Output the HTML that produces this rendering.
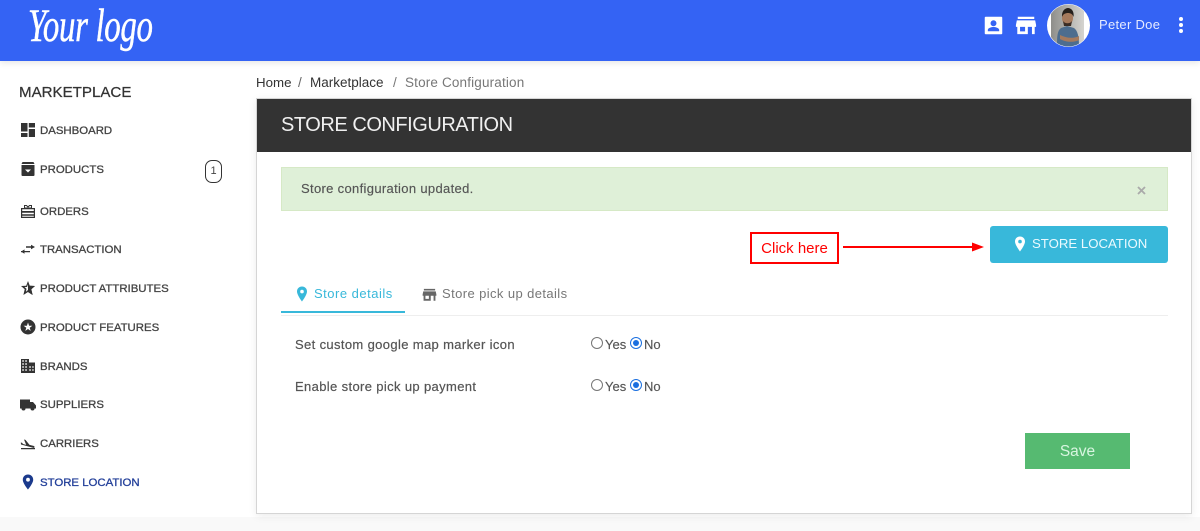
<!DOCTYPE html>
<html><head><meta charset="utf-8"><style>
html,body{margin:0;padding:0}
body{width:1200px;height:531px;position:relative;overflow:hidden;background:#fff;font-family:"Liberation Sans",sans-serif}
.a{position:absolute;white-space:nowrap}
.m{position:absolute;left:40px;font-size:11.400px;font-weight:normal;-webkit-text-stroke:.3px #444;color:#444;line-height:14px;white-space:nowrap;margin-top:1px}
.i{position:absolute;left:20px;width:16px;height:16px;fill:#333}
.lab{font-size:13px;color:#555;letter-spacing:.36px;line-height:16px;-webkit-text-stroke:.2px #555}
.rad{position:absolute;width:10px;height:10px;border:1px solid #767676;border-radius:50%;background:#fff}
.on{border-color:#1a6fe0}.on:after{content:"";position:absolute;left:2px;top:2px;width:6px;height:6px;border-radius:50%;background:#1a6fe0}
.t13{font-size:13px;color:#555;line-height:16px;-webkit-text-stroke:.15px #555}
</style></head><body>
<div class="a" style="left:0;top:517px;width:1200px;height:14px;background:#f9f9f9"></div>
<div class="a" style="left:0;top:0;width:1200px;height:61px;background:#3463f4;box-shadow:0 2px 6px rgba(0,0,0,.1)"></div>
<div class="a" style="left:28px;top:-2px;font-family:'Liberation Serif',serif;font-style:italic;color:#fff;font-size:47px;line-height:56px;transform:scaleX(.7);transform-origin:left top;letter-spacing:-.5px;-webkit-text-stroke:.5px #fff">Your logo</div>

<svg class="a" style="left:983px;top:15px" width="21" height="21" viewBox="0 0 24 24" fill="#fff"><path d="M3 2h18a1 1 0 0 1 1 1v18a1 1 0 0 1-1 1H3a1 1 0 0 1-1-1V3a1 1 0 0 1 1-1zm9 4a3.400 3.400 0 1 0 0 6.800A3.400 3.400 0 0 0 12 6zm-6.500 12.500h13V17c0-2.200-4.300-3.300-6.500-3.300S5.500 14.800 5.500 17z"/></svg>
<svg class="a" style="left:1015px;top:14px" width="22" height="22" viewBox="0 0 24 24" fill="#fff"><path d="M3 3h18v2.500H3zM2 7h20l1 5v2h-1.500v8h-3v-8H14v8H2.500v-8H1v-2zm3.500 7v5h5.500v-5z"/></svg>
<svg class="a" style="left:1047px;top:4px" width="43" height="43" viewBox="0 0 43 43"><defs><clipPath id="c"><circle cx="21.500" cy="21.500" r="21"/></clipPath><linearGradient id="g" x1="0" x2="1"><stop offset="0" stop-color="#8e8e8a"/><stop offset="1" stop-color="#d5d4d0"/></linearGradient></defs><circle cx="21.500" cy="21.500" r="21.500" fill="#fff"/><g clip-path="url(#c)"><rect x="4" y="0" width="33" height="43" fill="url(#g)"/><ellipse cx="20.500" cy="14" rx="5.500" ry="7" fill="#a57a5d"/><path d="M15 13c-.5-6 3-9 6-9s6.500 3 5.500 9c-1-3-3-4-5.500-4s-5 1-6 4z" fill="#26201c"/><path d="M16 17c2 3 7 3 9 0l-1 5h-7z" fill="#3b2c24"/><path d="M10 43c0-10 0-16 4-19l6-2 7 2c4 3 5 9 5 19z" fill="#4d6d8e"/><path d="M13 31c6 3 13 4 19 1v4c-6 3-14 2-19-1z" fill="#a57a5d"/></g></svg>
<div class="a" style="left:1099px;top:17px;color:#e6ebff;font-size:13px;line-height:16px;letter-spacing:.3px">Peter Doe</div>
<svg class="a" style="left:1178px;top:16px" width="6" height="18" viewBox="0 0 6 18" fill="#fff"><circle cx="3" cy="3" r="2"/><circle cx="3" cy="9" r="2"/><circle cx="3" cy="15" r="2"/></svg>

<div class="a" style="left:19px;top:84px;font-size:15.100px;line-height:18px;color:#333;-webkit-text-stroke:.25px #333">MARKETPLACE</div>

<svg class="i" style="top:122px" viewBox="0 0 16 16"><path d="M1 1h6.500v8.500H1zM8.800 1H15v4.500H8.800zM8.800 7H15v8H8.800zM1 11h6.500v4H1z"/></svg><div class="m" style="top:123px">DASHBOARD</div>
<svg class="i" style="top:161px" viewBox="0 0 16 16"><path d="M2.500 1h11l1 2H1.500zM1.500 4h13v10a1 1 0 0 1-1 1h-11a1 1 0 0 1-1-1zM8 11.500l3-3H5z" fill-rule="evenodd"/></svg><div class="m" style="top:162px">PRODUCTS</div>
<div class="a" style="left:205px;top:160px;width:15px;height:21px;border:1px solid #333;border-radius:7px;background:#fff;font-size:11px;line-height:21px;text-align:center;color:#444">1</div>
<svg class="i" style="top:203px" viewBox="0 0 16 16"><path d="M1 5h14v10H1zm1.200 1.300V8h11.600V6.300zm0 3.500v1.500h11.600V9.800zm0 3v.9h11.600v-.9z" fill-rule="evenodd"/><path d="M4.500 5V2.500h2L8 4l1.500-1.500h2V5z" fill="none" stroke="#333" stroke-width="1"/></svg><div class="m" style="top:204px">ORDERS</div>
<svg class="i" style="top:241px" viewBox="0 0 16 16"><path d="M1 10h9v1.300H1zM1 10.600l3.500-2.200v4.400zM6 5.200h5v1.500H6zM15 6l-4-2.200v4.400z"/></svg><div class="m" style="top:242px">TRANSACTION</div>
<svg class="i" style="top:280px" viewBox="0 0 16 16"><path d="M8 1l1.800 4.800L15 6l-3.700 3.200L12.600 15 8 12l-4.600 3 1.300-5.800L1 6l5.200-.2zm0 3.200L7 7H4.500l2 1.700-.6 3L8 10z" fill-rule="evenodd"/><path d="M9.800 5.800L15 6l-3.700 3.200L12.600 15 8 12z"/></svg><div class="m" style="top:281px">PRODUCT ATTRIBUTES</div>
<svg class="i" style="top:319px" viewBox="0 0 16 16"><path d="M8 .5a7.500 7.500 0 1 1 0 15A7.500 7.500 0 0 1 8 .5zm0 3L6.900 6.700H3.600l2.700 2-1 3.200L8 10l2.700 1.900-1-3.200 2.700-2H9.100z" fill-rule="evenodd"/></svg><div class="m" style="top:320px">PRODUCT FEATURES</div>
<svg class="i" style="top:358px" viewBox="0 0 16 16"><path d="M1 1h8v3.500h6V15H1zm1.300 1.300v1.500h1.500V2.300zm3 0v1.500h1.500V2.300zM2.300 5.300v1.500h1.500V5.300zm3 0v1.500h1.500V5.300zM2.300 8.300v1.500h1.500V8.300zm3 0v1.500h1.500V8.300zm4 0v1.500h1.500V8.300zm3 0v1.500h1.300V8.300zM2.300 11.300v1.500h1.500v-1.500zm3 0v1.500h1.500v-1.500zm4 0v1.500h1.500v-1.500zm3 0v1.500h1.300v-1.500z" fill-rule="evenodd"/></svg><div class="m" style="top:359px">BRANDS</div>
<svg class="i" style="left:20px;top:396px" viewBox="0 0 16 16"><path d="M0 3.500h10v2.500h3l3 3.500v3h-1.500a2 2 0 0 1-4 0h-5a2 2 0 0 1-4 0H0z"/></svg><div class="m" style="top:397px">SUPPLIERS</div>
<svg class="i" style="top:435px" viewBox="0 0 16 16"><path d="M1 13h14v1.300H1zM1 9.500l-.2-2 1.200.3 1 1.200 3.200.9L4 4.500l1.500.4 4 5 4 1c.8.2 1.300.8 1 1.500-.3.500-1 .6-1.500.4z"/></svg><div class="m" style="top:436px">CARRIERS</div>
<svg class="i" style="top:474px;fill:#1b3a8c" viewBox="0 0 16 16"><path d="M8 0.500c3 0 5.200 2.300 5.200 5.200 0 3.600-5.200 9.800-5.200 9.800S2.800 9.300 2.800 5.700C2.800 2.800 5 .5 8 .5zm0 3.300a1.900 1.900 0 1 0 0 3.800 1.900 1.900 0 0 0 0-3.800z" fill-rule="evenodd"/></svg><div class="m" style="top:475px;color:#24409a;-webkit-text-stroke:.3px #24409a">STORE LOCATION</div>

<div class="a" style="left:256px;top:75px;font-size:13.300px;line-height:16px;color:#333">Home</div>
<div class="a" style="left:298px;top:75px;font-size:13.500px;line-height:16px;color:#666">/</div>
<div class="a" style="left:310px;top:75px;font-size:13.500px;line-height:16px;color:#333">Marketplace</div>
<div class="a" style="left:393px;top:75px;font-size:13.500px;line-height:16px;color:#777">/</div>
<div class="a" style="left:405px;top:75px;font-size:13.500px;line-height:16px;color:#777;letter-spacing:.16px">Store Configuration</div>

<div class="a" style="left:256px;top:98px;width:934px;height:414px;background:#fff;border:1px solid #d5d5d5;box-shadow:0 2px 8px rgba(0,0,0,.08)"></div>
<div class="a" style="left:257px;top:99px;width:934px;height:53px;background:#333"></div>
<div class="a" style="left:281px;top:112px;font-size:20px;line-height:26px;color:#f0f0f0;letter-spacing:-.46px">STORE CONFIGURATION</div>

<div class="a" style="left:281px;top:167px;width:885px;height:42px;background:#dff0d8;border:1px solid #d6e9c6"></div>
<div class="a t13" style="left:301px;top:181px;letter-spacing:.33px">Store configuration updated.</div>
<svg class="a" style="left:1137px;top:186px" width="9" height="9" viewBox="0 0 9 9"><path d="M1 1l7 7M8 1l-7 7" stroke="#aaa" stroke-width="1.800"/></svg>

<div class="a" style="left:750px;top:232px;width:85px;height:28px;border:2px solid #f00;text-align:center;font-size:15px;line-height:29px;color:#f00;background:#fff">Click here</div>
<svg class="a" style="left:840px;top:240px" width="146" height="14" viewBox="0 0 146 14"><path d="M3 7h132" stroke="#f00" stroke-width="2"/><path d="M132 2.500l12 4.500-12 4.500z" fill="#f00"/></svg>
<div class="a" style="left:990px;top:226px;width:178px;height:37px;background:#38b8da;border-radius:3px"></div>
<svg class="a" style="left:1013px;top:236px" width="14" height="16" viewBox="0 0 14 16" fill="#fff"><path d="M7 0.500c3 0 5 2.200 5 5 0 3.500-5 10-5 10s-5-6.500-5-10c0-2.800 2-5 5-5zM7 3.800a1.800 1.800 0 1 0 0 3.600 1.800 1.800 0 0 0 0-3.600z" fill-rule="evenodd"/></svg>
<div class="a" style="left:1032px;top:235px;font-size:13.200px;line-height:17px;color:#eafaff">STORE LOCATION</div>

<div class="a" style="left:281px;top:315px;width:887px;height:1px;background:#eee"></div>
<div class="a" style="left:281px;top:311px;width:124px;height:2px;background:#38b8da"></div>
<svg class="a" style="left:295px;top:286px" width="14" height="16" viewBox="0 0 14 16" fill="#38b8da"><path d="M7 0.500c3 0 5 2.200 5 5 0 3.500-5 10-5 10s-5-6.500-5-10c0-2.800 2-5 5-5zM7 3.800a1.800 1.800 0 1 0 0 3.600 1.800 1.800 0 0 0 0-3.600z" fill-rule="evenodd"/></svg>
<div class="a" style="left:314px;top:286px;font-size:13px;line-height:16px;color:#38b8da;letter-spacing:.5px">Store details</div>
<svg class="a" style="left:422px;top:287px" width="15" height="15" viewBox="0 0 24 24" fill="#666"><path d="M3 3h18v2.500H3zM2 7h20l1 5v2h-1.500v8h-3v-8H14v8H2.500v-8H1v-2zm3.500 7v5h5.500v-5z"/></svg>
<div class="a" style="left:442px;top:286px;font-size:13px;line-height:16px;color:#777;letter-spacing:.4px">Store pick up details</div>

<div class="a lab" style="left:295px;top:337px">Set custom google map marker icon</div>
<div class="rad" style="left:591px;top:337px"></div><div class="a t13" style="left:605px;top:337px">Yes</div>
<div class="rad on" style="left:630px;top:337px"></div><div class="a t13" style="left:644px;top:337px">No</div>

<div class="a lab" style="left:295px;top:379px">Enable store pick up payment</div>
<div class="rad" style="left:591px;top:379px"></div><div class="a t13" style="left:605px;top:379px">Yes</div>
<div class="rad on" style="left:630px;top:379px"></div><div class="a t13" style="left:644px;top:379px">No</div>

<div class="a" style="left:1025px;top:433px;width:105px;height:36px;background:#56ba71;text-align:center;font-size:15.500px;line-height:37px;color:#d8f5e0">Save</div>
</body></html>
